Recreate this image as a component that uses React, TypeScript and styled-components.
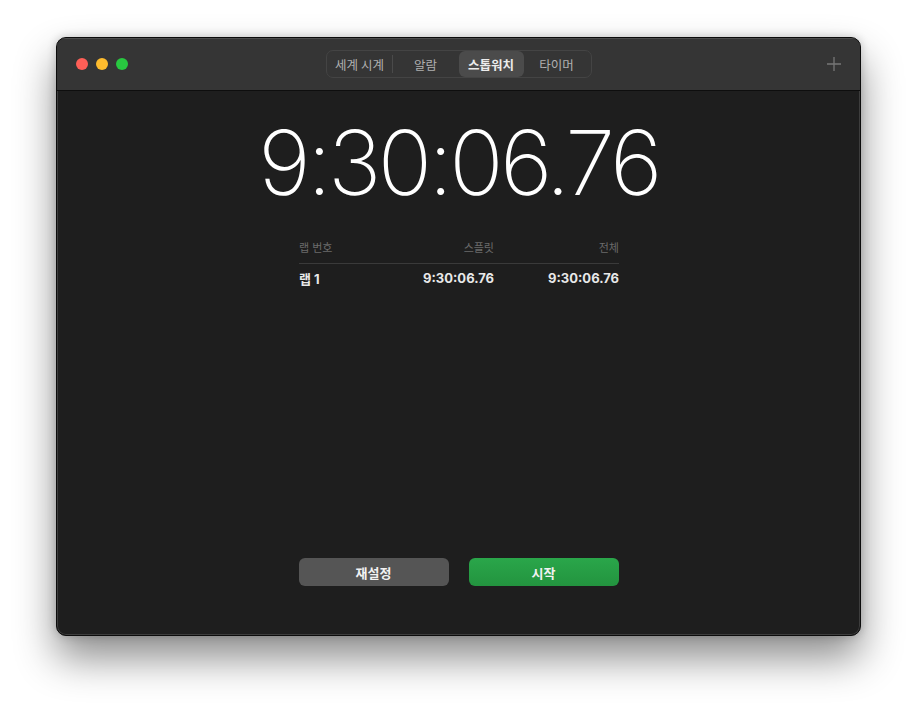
import React from "react";
import styled, { createGlobalStyle } from "styled-components";

const Global = createGlobalStyle`
  html, body { margin: 0; padding: 0; background: #ffffff; }
  body { font-family: "Inter", "Noto Sans CJK KR", sans-serif; }
`;

const Page = styled.div`
  width: 917px;
  height: 710px;
  padding: 37px 56px 0 56px;
  box-sizing: border-box;
`;

const Window = styled.div`
  width: 805px;
  height: 599px;
  box-sizing: border-box;
  border-radius: 10px;
  border: 1px solid #0c0c0c;
  box-shadow: inset 0 0 0 1px rgba(255, 255, 255, 0.14), 0 22px 40px rgba(0, 0, 0, 0.45), 0 0 10px rgba(0,0,0,0.2);
  background: #1e1e1e;
  display: flex;
  flex-direction: column;
  overflow: hidden;
`;

const TitleBar = styled.div`
  height: 53px;
  flex: none;
  background: #353535;
  border-bottom: 1px solid #0e0e0e;
  display: grid;
  grid-template-columns: 1fr auto 1fr;
  align-items: center;
  padding: 0 18px 0 19px;
  box-sizing: border-box;
  box-shadow: inset 0 1px 0 rgba(255,255,255,0.12);
`;

const Lights = styled.div`
  display: flex;
  gap: 8px;
`;

const Light = styled.span<{ $c: string }>`
  width: 12px;
  height: 12px;
  border-radius: 50%;
  background: ${(p) => p.$c};
`;

const Segmented = styled.div`
  display: flex;
  align-items: center;
  height: 28px;
  box-sizing: border-box;
  border: 1px solid #444;
  border-radius: 7px;
  padding: 0 1px;
  margin-left: -1px;
`;

const Seg = styled.div<{ $active?: boolean; $w: number; $sep?: boolean }>`
  width: ${(p) => p.$w}px;
  height: 26px;
  display: flex;
  align-items: center;
  justify-content: center;
  font-family: "Noto Sans CJK KR", sans-serif;
  font-size: 12.5px;
  font-weight: ${(p) => (p.$active ? 700 : 400)};
  color: ${(p) => (p.$active ? "#ececec" : "#b0b0b0")};
  background: ${(p) => (p.$active ? "#4b4b4b" : "transparent")};
  border-radius: 6px;
  border-right: ${(p) => (p.$sep ? "1px solid #4a4a4a" : "none")};
  ${(p) => (p.$sep ? "border-radius: 0; height: 18px;" : "")}
  box-sizing: border-box;
`;

const PlusWrap = styled.div`
  justify-self: end;
  display: flex;
  align-items: center;
`;

const Content = styled.div`
  flex: 1;
  display: flex;
  flex-direction: column;
  align-items: center;
`;

const BigTime = styled.div`
  margin-top: 17px;
  font-family: "Inter", sans-serif;
  font-weight: 150;
  font-size: 90px;
  line-height: 110px;
  color: #ffffff;
  letter-spacing: -3.8px;
`;

const Table = styled.div`
  width: 320px;
  margin-top: 18px;
  margin-left: 1px;
`;

const Row = styled.div<{ $head?: boolean }>`
  display: grid;
  grid-template-columns: 1fr 130px 125px;
  align-items: center;
  height: ${(p) => (p.$head ? 28 : 28)}px;
  padding-bottom: ${(p) => (p.$head ? 6 : 0)}px;
  border-bottom: ${(p) => (p.$head ? "1px solid #3a3a3a" : "none")};
  font-family: "Noto Sans CJK KR", sans-serif;
  font-size: ${(p) => (p.$head ? 11 : 13)}px;
  font-weight: ${(p) => (p.$head ? 400 : 700)};
  color: ${(p) => (p.$head ? "#6b6b6b" : "#e8e8e8")};
  box-sizing: border-box;
`;

const Cell = styled.span<{ $right?: boolean }>`
  text-align: ${(p) => (p.$right ? "right" : "left")};
  font-family: "Inter", "Noto Sans CJK KR", sans-serif;
`;

const Spacer = styled.div`
  flex: 1;
`;

const Buttons = styled.div`
  display: flex;
  gap: 20px;
  margin-bottom: 49px;
`;

const Button = styled.button<{ $green?: boolean }>`
  width: 150px;
  height: 28px;
  border: none;
  border-radius: 6px;
  background: ${(p) => (p.$green ? "linear-gradient(#2aa64a, #23943f)" : "#555555")};
  color: #f2f2f2;
  font-family: "Noto Sans CJK KR", sans-serif;
  font-weight: 700;
  font-size: 13px;
  display: flex;
  align-items: center;
  justify-content: center;
  padding: 0;
`;

export default function App() {
  return (
    <>
      <Global />
      <Page>
        <Window>
          <TitleBar>
            <Lights>
              <Light $c="#fe5f57" />
              <Light $c="#febc2e" />
              <Light $c="#28c840" />
            </Lights>
            <Segmented>
              <Seg $w={65} $sep>세계 시계</Seg>
              <Seg $w={66}>알람</Seg>
              <Seg $w={65} $active>스톱워치</Seg>
              <Seg $w={66}>타이머</Seg>
            </Segmented>
            <PlusWrap>
              <svg width="16" height="16" viewBox="0 0 16 16">
                <path d="M8 1v14M1 8h14" stroke="#777" strokeWidth="1.3" fill="none" />
              </svg>
            </PlusWrap>
          </TitleBar>
          <Content>
            <BigTime>9:30:06.76</BigTime>
            <Table>
              <Row $head>
                <Cell>랩 번호</Cell>
                <Cell $right>스플릿</Cell>
                <Cell $right>전체</Cell>
              </Row>
              <Row>
                <Cell>랩 1</Cell>
                <Cell $right>9:30:06.76</Cell>
                <Cell $right>9:30:06.76</Cell>
              </Row>
            </Table>
            <Spacer />
            <Buttons>
              <Button>재설정</Button>
              <Button $green>시작</Button>
            </Buttons>
          </Content>
        </Window>
      </Page>
    </>
  );
}
